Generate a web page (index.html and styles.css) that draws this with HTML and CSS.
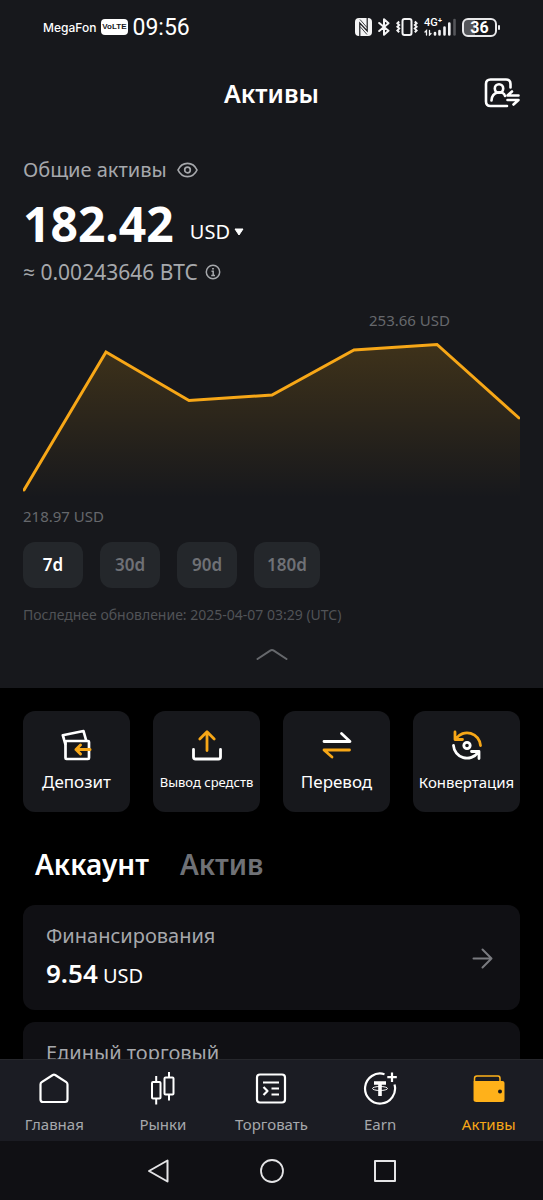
FILE: index.html
```html
<!DOCTYPE html>
<html lang="ru">
<head>
<meta charset="utf-8">
<meta name="viewport" content="width=device-width, initial-scale=1">
<title>Активы</title>
<link rel="stylesheet" href="styles.css">
</head>
<body>
<div class="app">
  <div class="status">
    <div class="status-left">
      <span class="carrier">MegaFon</span>
      <span class="volte">VoLTE</span>
      <span class="clock">09:56</span>
    </div>
    <div class="status-right">
      <svg width="17" height="18" viewBox="0 0 17 18"><rect width="17" height="18" rx="4" fill="#f4f4f5"/><path d="M4.800 18V5L12.200 13V0" fill="none" stroke="#17181c" stroke-width="1.200"/><path d="M5 1.500L12 9.500M5 8.500L12 16.500" fill="none" stroke="#17181c" stroke-width=".8"/></svg>
      <svg width="12" height="18" viewBox="0 0 12 18"><path d="M1.200 5L10.500 12.800L6 16.800V1.200L10.500 5.200L1.200 13" fill="none" stroke="#f4f4f5" stroke-width="2" stroke-linejoin="round" stroke-linecap="round"/></svg>
      <svg width="22" height="18" viewBox="0 0 22 18" fill="none" stroke="#f4f4f5"><rect x="6.500" y="1" width="9" height="16" rx="2" stroke-width="2"/><path d="M3.200 3.500L1.400 5.200L3.200 7L1.400 8.800L3.200 10.600L1.400 12.400L3.200 14.200M18.800 3.500L20.600 5.200L18.800 7L20.600 8.800L18.800 10.600L20.600 12.400L18.800 14.200" stroke-width="2"/></svg>
      <div class="signal">
        <span class="signal-type">4G⁺</span>
        <svg width="32" height="18" viewBox="0 0 32 18"><g stroke="#f4f4f5" stroke-linecap="round" fill="none"><path d="M2.500 17V12.500L1 14M5.500 12.500V17L7 15.500" stroke-width="1.300"/><path d="M11 16.500V15M15.500 16.500V13M20.500 16.500V9.500M25.300 16.500V5.500" stroke-width="2.600"/></g><path d="M30.500 16.500V2" stroke="#55565a" stroke-width="2.600" stroke-linecap="round"/></svg>
      </div>
      <div class="battery">36</div>
    </div>
  </div>

  <main class="content">
    <section class="overview">
      <header class="header">
        <h1 class="title">Активы</h1>
        <button class="switch" aria-label="Сменить аккаунт">
          <svg width="36" height="30" viewBox="0 0 36 30" fill="none" stroke="#fff" stroke-width="2.600" stroke-linecap="round" stroke-linejoin="round"><path d="M26.500 9.500V6Q26.500 1.500 22 1.500H6.500Q2 1.500 2 6V23.500Q2 28 6.500 28H23"/><circle cx="15" cy="10.500" r="4.200"/><path d="M7.500 22.500C8 12.500 19.500 12.500 21 18"/><path d="M34.500 17.500H23.500L28 13.500M23.500 22H34.500L29.500 26.500"/></svg>
        </button>
      </header>

      <div class="total-label">
        <span>Общие активы</span>
        <button aria-label="Скрыть баланс"><svg width="21" height="16" viewBox="0 0 21 16" fill="none" stroke="#a6a8ac" stroke-width="1.700"><path d="M1 8C5 -.8 16 -.8 20 8C16 16.800 5 16.800 1 8Z" stroke-linejoin="round"/><circle cx="10.500" cy="8" r="2.800"/></svg></button>
      </div>
      <div class="balance">
        <strong>182.42</strong>
        <span class="currency">
          <select aria-label="Валюта"><option>USD</option></select>
          <svg width="10" height="8" viewBox="0 0 10 8"><path d="M1 1H9L5 7Z" fill="#fff" stroke="#fff" stroke-linejoin="round"/></svg>
        </span>
      </div>
      <div class="btc">
        <span>≈ 0.00243646 BTC</span>
        <button aria-label="Подробнее"><svg width="16" height="16" viewBox="0 0 16 16" fill="none" stroke="#a6a8ac" stroke-width="1.500"><circle cx="8" cy="8" r="6.700"/><path d="M6.500 7.200H8.200V11.500M6.200 11.500H10"/><path d="M8 4V5.600" stroke-width="1.800"/></svg></button>
      </div>

      <div class="peak">253.66 USD</div>
      <svg class="chart" viewBox="0 0 497 158" role="img" aria-label="Динамика активов за 7 дней">
        <defs><linearGradient id="area" x1="0" y1="0" x2="0" y2="1"><stop offset="0" stop-color="#ffb010" stop-opacity=".17"/><stop offset="1" stop-color="#ffb010" stop-opacity="0"/></linearGradient></defs>
        <path d="M1 150L83 12L166 60.500L249 55L331 10L414 4.500L497 78V158H1Z" fill="url(#area)"/>
        <path d="M1 150L83 12L166 60.500L249 55L331 10L414 4.500L496 78" fill="none" stroke="#f7a717" stroke-width="3" stroke-linecap="round"/>
      </svg>
      <div class="low">218.97 USD</div>

      <div class="ranges">
        <button class="range active">7d</button>
        <button class="range">30d</button>
        <button class="range">90d</button>
        <button class="range">180d</button>
      </div>
      <p class="updated">Последнее обновление: 2025-04-07 03:29 (UTC)</p>
      <button class="collapse" aria-label="Свернуть"><svg width="32" height="12" viewBox="0 0 32 12" fill="none" stroke="#66686c" stroke-width="2" stroke-linecap="round"><path d="M1.500 11L14.200 2.600Q16 1.400 17.800 2.600L30.500 11"/></svg></button>
    </section>

    <section class="actions">
      <button class="action">
        <svg width="32" height="32" viewBox="0 0 32 32" fill="none" stroke="#fff" stroke-width="2.700" stroke-linejoin="round" stroke-linecap="round"><rect x="4.500" y="12" width="23.500" height="18" rx="1"/><path d="M4.300 15L1.800 6.200L22.500 2L25 11"/><path d="M29 20.500H15M19.500 16L15 20.500L19.500 25" stroke="#f7a717" stroke-width="3"/></svg>
        <span>Депозит</span>
      </button>
      <button class="action action-small">
        <svg width="32" height="32" viewBox="0 0 32 32" fill="none" stroke="#fff" stroke-width="2.800" stroke-linejoin="round" stroke-linecap="round"><path d="M2.500 20.500V28Q2.500 30 4.500 30H27.500Q29.500 30 29.500 28V20.500"/><path d="M16 21.500V3M8.800 10L16 2.800L23.200 10" stroke="#f7a717"/></svg>
        <span>Вывод средств</span>
      </button>
      <button class="action">
        <svg width="32" height="32" viewBox="0 0 32 32" fill="none" stroke="#fff" stroke-width="2.800" stroke-linejoin="round" stroke-linecap="round"><path d="M3 12.500H29L20.500 4.500"/><path d="M28.500 21H3L11 28" stroke="#f7a717"/></svg>
        <span>Перевод</span>
      </button>
      <button class="action action-medium">
        <svg width="32" height="32" viewBox="0 0 32 32" fill="none" stroke="#fff" stroke-width="2.800" stroke-linejoin="round" stroke-linecap="round"><path d="M5 9.500A13.500 13.500 0 0 1 29.500 16.500M4 3V10.500H11.500" stroke="#f7a717"/><path d="M2.500 16.500A13.500 13.500 0 0 0 27 23.500M20.500 22.500H28V29.500"/><circle cx="16" cy="16.500" r="3.200"/></svg>
        <span>Конвертация</span>
      </button>
    </section>

    <div class="tabs" role="tablist">
      <button class="tab active" role="tab" aria-selected="true">Аккаунт</button>
      <button class="tab" role="tab" aria-selected="false">Актив</button>
    </div>

    <section class="accounts">
      <a class="account" href="#funding">
        <span class="account-name">Финансирования</span>
        <span class="account-value"><strong>9.54</strong> USD</span>
        <svg class="arrow" width="21" height="21" viewBox="0 0 21 21" fill="none" stroke="#797a7f" stroke-width="2" stroke-linecap="round" stroke-linejoin="round"><path d="M1.500 10.500H19.500M10.500 1.500L19.500 10.500L10.500 19.500"/></svg>
      </a>
      <a class="account" href="#unified">
        <span class="account-name">Единый торговый</span>
      </a>
    </section>
  </main>

  <nav class="nav">
    <a class="nav-item" href="#home">
      <svg width="34" height="34" viewBox="0 0 34 34" fill="none" stroke="#fff" stroke-width="2.200" stroke-linejoin="round"><path d="M3.500 12.500Q3.500 11 4.700 10.200L15.800 3Q17 2.200 18.200 3L29.300 10.200Q30.500 11 30.500 12.500V27.500Q30.500 30 28 30H6Q3.500 30 3.500 27.500Z"/></svg>
      <span>Главная</span>
    </a>
    <a class="nav-item" href="#markets">
      <svg width="34" height="34" viewBox="0 0 34 34" fill="none" stroke="#fff" stroke-width="2"><rect x="6" y="10" width="8.500" height="16.500" rx="1"/><rect x="18.500" y="5.500" width="9" height="17" rx="1"/><path d="M10.200 4V10M10.200 26.500V32.500M23 0V5.500M23 22.500V28.500"/></svg>
      <span>Рынки</span>
    </a>
    <a class="nav-item" href="#trade">
      <svg width="34" height="34" viewBox="0 0 34 34" fill="none" stroke="#fff" stroke-width="2.200" stroke-linejoin="round"><rect x="3" y="2.500" width="28" height="28" rx="3"/><path d="M9 10.500H25M17.500 16.500H25M17.500 22.500H25M9.500 15L13.500 19L9.500 23"/></svg>
      <span>Торговать</span>
    </a>
    <a class="nav-item" href="#earn">
      <svg width="34" height="34" viewBox="0 0 34 34" fill="none" stroke="#fff" stroke-width="2.200"><path d="M21.500 2.200A15 15 0 1 0 31.500 12.500"/><path d="M29 .5V10M24.300 5.200H33.800"/><path d="M11 11H23M17 11V24" stroke-width="3.600"/><ellipse cx="17" cy="16.500" rx="7.500" ry="2" stroke-width="1"/></svg>
      <span>Earn</span>
    </a>
    <a class="nav-item current" href="#assets" aria-current="page">
      <svg width="34" height="34" viewBox="0 0 34 34"><path d="M2.500 29V6.500Q2.500 4 5 4H26Q28 4 28 6.500V11" fill="none" stroke="#ffb11a" stroke-width="1.500"/><path d="M1.700 9H30.500Q32.500 9 32.500 11V27.500Q32.500 30 30 30H4.200Q1.700 30 1.700 27.500Z" fill="#ffb11a"/><circle cx="28" cy="19.500" r="2" fill="#15161b"/></svg>
      <span>Активы</span>
    </a>
  </nav>
  <div class="system">
    <button aria-label="Назад"><svg width="24" height="26" viewBox="0 0 24 26"><path d="M2 13L20.500 2.500V23.500Z" fill="none" stroke="#e4e4e6" stroke-width="2" stroke-linejoin="round"/></svg></button>
    <button aria-label="Домой"><svg width="24" height="26" viewBox="0 0 24 26"><circle cx="12" cy="13" r="11" fill="none" stroke="#e4e4e6" stroke-width="1.800"/></svg></button>
    <button aria-label="Недавние"><svg width="24" height="26" viewBox="0 0 24 26"><rect x="2" y="3" width="20" height="20" fill="none" stroke="#e4e4e6" stroke-width="2" stroke-linejoin="round"/></svg></button>
  </div>
</div>
</body>
</html>
```
FILE: styles.css
```css
* {
  box-sizing: border-box;
}

body {
  margin: 0;
  background: #000;
  color: #fff;
  font-family: "Noto Sans", "Open Sans", sans-serif;
}

button,
select {
  margin: 0;
  padding: 0;
  border: 0;
  background: none;
  color: inherit;
  font: inherit;
}

a {
  color: inherit;
  text-decoration: none;
}

svg {
  display: block;
  flex: none;
}

.app {
  display: flex;
  flex-direction: column;
  height: 100vh;
}

.status {
  display: flex;
  flex: none;
  align-items: center;
  justify-content: space-between;
  height: 54px;
  padding: 0 43px;
  background: #17181c;
}

.status-left,
.status-right {
  display: flex;
  align-items: center;
}

.status-left {
  gap: 5px;
  font-family: Inter, sans-serif;
}

.status-right {
  gap: 6px;
}

.carrier {
  font-size: 12px;
  font-weight: 500;
}

.volte {
  padding: 0 1px;
  border-radius: 4px;
  background: #fff;
  color: #17181c;
  font-family: "Liberation Sans Narrow", "Liberation Sans", sans-serif;
  font-size: 8px;
  font-weight: 700;
  line-height: 16px;
}

.clock {
  font-family: Roboto, sans-serif;
  font-size: 23px;
}

.signal {
  position: relative;
}

.signal-type {
  position: absolute;
  top: 0;
  left: 0;
  font-family: Roboto, sans-serif;
  font-size: 11px;
  font-weight: 500;
  line-height: 10px;
}

.battery {
  position: relative;
  width: 35px;
  margin-right: 3px;
  border: 2px solid #e8e8ea;
  border-radius: 6px;
  background: linear-gradient(90deg, #55565a 36%, #17181c 36%);
  font-family: Roboto, sans-serif;
  font-size: 16px;
  font-weight: 700;
  line-height: 15px;
  text-align: center;
}

.battery::after {
  content: "";
  position: absolute;
  top: 5px;
  right: -5px;
  width: 2px;
  height: 5px;
  border-radius: 1px;
  background: #e8e8ea;
}

.content {
  flex: 1;
  min-height: 0;
  overflow-y: auto;
  scrollbar-width: none;
}

.overview {
  display: flex;
  flex-direction: column;
  padding: 0 23px 5px;
  background: #17181c;
}

.header {
  display: grid;
  grid-template-columns: 1fr auto 1fr;
  align-items: center;
  height: 78px;
}

.title {
  grid-column: 2;
  margin: 0;
  font-size: 25px;
  font-weight: 600;
  line-height: 36px;
}

.switch {
  justify-self: end;
}

.total-label,
.btc {
  display: flex;
  align-items: center;
  color: #a6a8ac;
  font-size: 20px;
  line-height: 28px;
}

.total-label {
  gap: 10px;
  margin-top: 24px;
}

.btc {
  gap: 7px;
  font-size: 21px;
}

.balance {
  display: flex;
  align-items: center;
  gap: 16px;
  margin: 8px 0 2px;
  line-height: 64px;
}

.balance strong {
  font-size: 48px;
  font-weight: 700;
}

.currency {
  display: flex;
  align-items: center;
  gap: 3px;
  padding-top: 16px;
}

.currency select {
  appearance: none;
  font-size: 20px;
  line-height: 28px;
}

.peak,
.low {
  color: #66686c;
  font-size: 15px;
  line-height: 20px;
}

.peak {
  align-self: flex-end;
  margin: 24px 70px 10px 0;
}

.chart {
  width: 100%;
  height: auto;
}

.low {
  margin-top: 8px;
}

.ranges {
  display: flex;
  gap: 17px;
  margin-top: 16px;
}

.range {
  min-width: 60px;
  padding: 0 13px;
  border-radius: 12px;
  background: #24272b;
  color: #6f7176;
  font-size: 17px;
  font-weight: 600;
  line-height: 46px;
}

.range.active {
  color: #fff;
}

.updated {
  margin: 17px 0 0;
  color: #515357;
  font-size: 14px;
  line-height: 20px;
}

.collapse {
  align-self: center;
  padding: 23px;
}

.actions {
  display: grid;
  grid-template-columns: repeat(4, minmax(0, 1fr));
  gap: 23px;
  padding: 23px 23px 0;
}

.action {
  display: flex;
  flex-direction: column;
  align-items: center;
  gap: 9px;
  padding: 18px 0;
  border-radius: 12px;
  background: #17181c;
  font-size: 17px;
  line-height: 24px;
  white-space: nowrap;
}

.action-medium {
  font-size: 15px;
}

.action-small {
  font-size: 13px;
}

.tabs {
  display: flex;
  gap: 31px;
  margin: 34px 35px 23px;
}

.tab {
  color: #6f7176;
  font-size: 28px;
  font-weight: 600;
  line-height: 36px;
}

.tab.active {
  color: #fff;
}

.accounts {
  display: grid;
  gap: 12px;
  padding: 0 23px 23px;
}

.account {
  display: grid;
  grid-template-columns: 1fr auto;
  align-items: center;
  row-gap: 8px;
  padding: 17px 27px 16px 23px;
  border-radius: 12px;
  background: #101014;
}

.account-name {
  grid-column: 1;
  color: #a6a8ac;
  font-size: 20px;
  line-height: 28px;
}

.account-value {
  grid-column: 1;
  font-size: 20px;
  line-height: 36px;
}

.account-value strong {
  font-size: 26px;
  font-weight: 600;
  line-height: 20px;
}

.arrow {
  grid-column: 2;
  grid-row: 1 / 3;
}

.nav {
  display: grid;
  flex: none;
  grid-template-columns: repeat(5, minmax(0, 1fr));
  padding: 12px 0 5px;
  border-top: 1px solid #26272c;
  background: #1b1c23;
}

.nav-item {
  display: flex;
  flex-direction: column;
  align-items: center;
  gap: 6px;
  color: #a6a8ac;
  font-size: 15px;
  line-height: 24px;
}

.nav-item.current {
  color: #f7a717;
}

.system {
  display: flex;
  flex: none;
  align-items: center;
  justify-content: center;
  gap: 89px;
  height: 59px;
  background: #101014;
}
```
